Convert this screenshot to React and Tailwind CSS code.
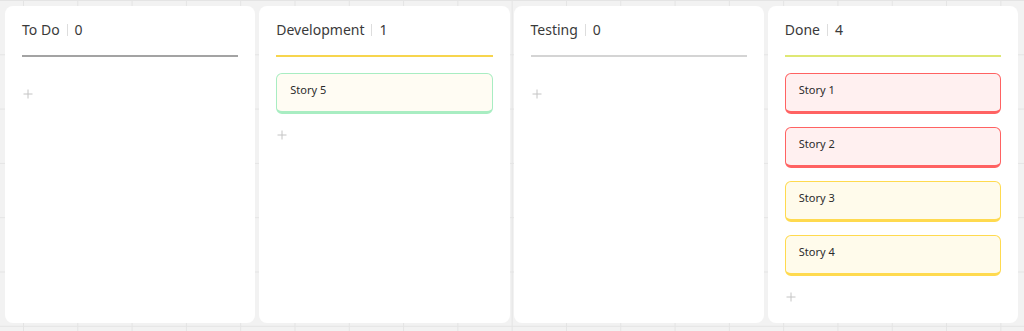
import React from "react";

const columns = [
  { title: "To Do", count: 0, line: "border-[#a3a3a3]", stories: [] },
  {
    title: "Development",
    count: 1,
    line: "border-[#f7d54e]",
    stories: [{ name: "Story 5", tone: "green" }],
  },
  { title: "Testing", count: 0, line: "border-[#d4d4d4]", stories: [] },
  {
    title: "Done",
    count: 4,
    line: "border-[#dfe874]",
    stories: [
      { name: "Story 1", tone: "red" },
      { name: "Story 2", tone: "red" },
      { name: "Story 3", tone: "yellow" },
      { name: "Story 4", tone: "yellow" },
    ],
  },
];

const toneClasses = {
  green: "border-[#a8edc2] bg-[#fffcf3]",
  red: "border-[#ff6262] bg-[#fff0f0]",
  yellow: "border-[#ffda4f] bg-[#fffbeb]",
};

function Plus() {
  return (
    <svg width="10" height="10" viewBox="0 0 10 10" className="block">
      <path d="M5 0.5v9M0.5 5h9" stroke="#c4c4c4" strokeWidth="1" fill="none" />
    </svg>
  );
}

function StoryCard({ story }) {
  return (
    <div
      className={`h-[41px] rounded-[6px] border-[1.5px] border-b-[3.5px] pl-[13px] pt-[8px] text-[11px] leading-[16px] text-[#2b2b2b] ${toneClasses[story.tone]}`}
    >
      {story.name}
    </div>
  );
}

function Column({ col }) {
  return (
    <div className="flex-1 rounded-[8px] bg-white px-[17px] pt-[14px]">
      <div className={`flex h-[37px] items-start border-b-2 ${col.line}`}>
        <div className="flex h-[20px] items-center text-[14px] leading-[20px] text-[#3a3a3a]">
          <span>{col.title}</span>
          <span className="mx-[7px] h-[12px] w-px bg-[#dddddd]" />
          <span>{col.count}</span>
        </div>
      </div>
      <div className="flex flex-col gap-[13px] pt-[16px]">
        {col.stories.map((s) => (
          <StoryCard key={s.name} story={s} />
        ))}
      </div>
      <div className="pl-[1px] pt-[16px]">
        <Plus />
      </div>
    </div>
  );
}

export default function App() {
  return (
    <div
      className="flex h-[331px] w-[1024px] gap-[4px] bg-[#f2f2f2] bg-[linear-gradient(to_right,#e4e4e4_1px,transparent_1px),linear-gradient(to_bottom,#e4e4e4_1px,transparent_1px)] bg-[size:54.3px_54.3px] bg-[position:23px_0px] pb-[8px] pl-[5px] pr-[6px] pt-[6px]"
      style={{ fontFamily: '"Noto Sans", "Open Sans", sans-serif' }}
    >
      {columns.map((c) => (
        <Column key={c.title} col={c} />
      ))}
    </div>
  );
}
